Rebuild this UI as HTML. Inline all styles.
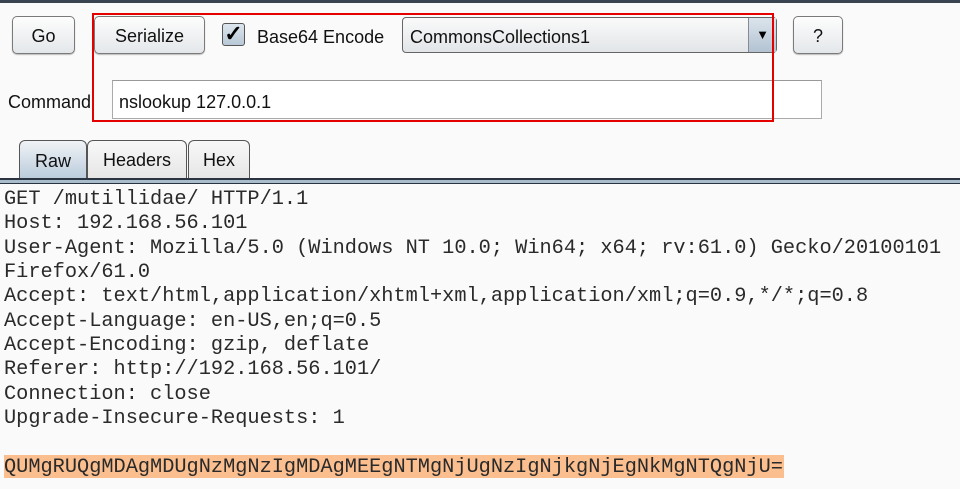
<!DOCTYPE html>
<html><head><style>
body{margin:0;width:960px;height:489px;background:#fafafa;position:relative;overflow:hidden;font-family:"Liberation Sans",sans-serif;}
.a{position:absolute;box-sizing:border-box}
.btn{border:1px solid #7a7a7a;border-radius:5px;background:linear-gradient(#fdfdfd,#e4e7ea);font-size:18px;color:#111;display:flex;align-items:center;justify-content:center;box-shadow:0 1px 1px #bbb;padding-top:3px}
.tab{border:1px solid #555;border-bottom:none;border-radius:6px 6px 0 0;background:linear-gradient(#f8f8f8,#e6e6e6);font-size:18px;display:flex;align-items:center;justify-content:center;color:#111;padding-top:2px}
pre{position:absolute;left:4px;top:188px;margin:0;font-family:"Liberation Mono",monospace;font-size:20.3px;line-height:24.35px;color:#2a2a2a;}
</style></head><body>
<div class="a" style="left:0;top:0;width:960px;height:3px;background:#3a4450"></div>
<div class="a btn" style="left:12px;top:16px;width:63px;height:38px">Go</div>
<div class="a btn" style="left:94px;top:16px;width:111px;height:38px">Serialize</div>
<div class="a" style="left:222px;top:23px;width:23px;height:23px;border:1px solid #555;border-radius:3px;background:linear-gradient(#dde6ee,#b8c8d6);font-size:22px;line-height:20px;text-align:center;font-weight:bold">✓</div>
<div class="a" style="left:257px;top:27px;font-size:18px;color:#111">Base64 Encode</div>
<div class="a" style="left:402px;top:17px;width:375px;height:36px;border:1px solid #666;border-radius:4px;background:linear-gradient(#fafafa,#e2e5e8)"></div>
<div class="a" style="left:410px;top:27px;font-size:18px;color:#111">CommonsCollections1</div>
<div class="a" style="left:748px;top:18px;width:28px;height:34px;border-left:1px solid #889;background:linear-gradient(#dbe4ec,#b3c3d2);font-size:13px;text-align:center;line-height:34px">▼</div>
<div class="a btn" style="left:793px;top:16px;width:50px;height:38px">?</div>
<div class="a" style="left:8px;top:92px;font-size:18px;color:#111">Command</div>
<div class="a" style="left:112px;top:80px;width:710px;height:39px;border:1px solid #aaa;background:#fff;border-top-color:#999"></div>
<div class="a" style="left:119px;top:92px;font-size:18px;color:#111">nslookup 127.0.0.1</div>
<div class="a" style="left:92px;top:13px;width:682px;height:109px;border:2px solid #e50000"></div>
<div class="a tab" style="left:19px;top:140px;width:68px;height:39px;background:linear-gradient(#f0f3f6,#b9cbdb)">Raw</div>
<div class="a tab" style="left:87px;top:140px;width:100px;height:38px">Headers</div>
<div class="a tab" style="left:188px;top:140px;width:62px;height:38px">Hex</div>
<div class="a" style="left:0;top:178px;width:960px;height:6px;background:#a9bccc;border-top:2px solid #2a3440;border-bottom:1px solid #2a3440"></div>
<div class="a" style="left:4px;top:455px;width:780px;height:23px;background:#fbbf8f"></div>
<pre>GET /mutillidae/ HTTP/1.1
Host: 192.168.56.101
User-Agent: Mozilla/5.0 (Windows NT 10.0; Win64; x64; rv:61.0) Gecko/20100101
Firefox/61.0
Accept: text/html,application/xhtml+xml,application/xml;q=0.9,*/*;q=0.8
Accept-Language: en-US,en;q=0.5
Accept-Encoding: gzip, deflate
Referer: http://192.168.56.101/
Connection: close
Upgrade-Insecure-Requests: 1

QUMgRUQgMDAgMDUgNzMgNzIgMDAgMEEgNTMgNjUgNzIgNjkgNjEgNkMgNTQgNjU=</pre>
</body></html>
